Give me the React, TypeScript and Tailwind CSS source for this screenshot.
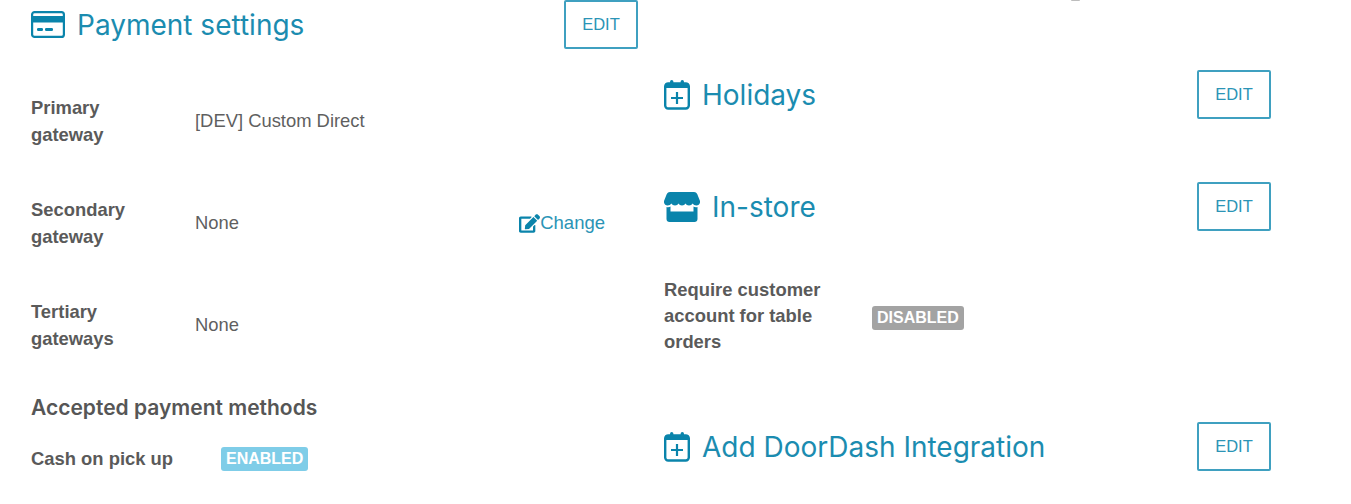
import React from "react";
import { FaEdit } from "react-icons/fa";

const CardIcon = () => (
  <svg width="34" height="27" viewBox="0 0 34 27" fill="none" className="shrink-0">
    <rect x="1.100" y="1.100" width="31.800" height="24.800" rx="2.500" stroke="#0a84ab" strokeWidth="2.200" />
    <rect x="1" y="5" width="32" height="6.500" fill="#0a84ab" />
    <rect x="6" y="17" width="6" height="3" rx="1.200" fill="#0a84ab" />
    <rect x="14" y="17" width="8" height="3" rx="1.200" fill="#0a84ab" />
  </svg>
);

const CalendarPlusIcon = () => (
  <svg width="26" height="30" viewBox="0 0 26 30" fill="none" className="shrink-0">
    <rect x="1.200" y="3.500" width="23.600" height="25" rx="3" stroke="#0a84ab" strokeWidth="2.400" />
    <rect x="1.200" y="3.500" width="23.600" height="4.500" fill="#0a84ab" />
    <rect x="6" y="0" width="3.400" height="6" rx="1.700" fill="#0a84ab" />
    <rect x="16.600" y="0" width="3.400" height="6" rx="1.700" fill="#0a84ab" />
    <path d="M13 12V24M7 18h12" stroke="#0a84ab" strokeWidth="2.200" />
  </svg>
);

const StoreIcon = () => (
  <svg width="36" height="30" viewBox="0 0 36 30" fill="none" className="shrink-0">
    <path
      d="M6 0h24c1.500 0 2.500.7 3.200 2L36 9c.4 2.600-1.400 4.500-3.600 4.500-1.700 0-3-.9-3.700-2-.8 1.200-2.200 2-3.700 2s-2.900-.8-3.500-2c-.7 1.200-2 2-3.500 2s-2.800-.8-3.500-2c-.6 1.200-2 2-3.500 2s-2.900-.8-3.700-2c-.7 1.100-2 2-3.700 2C1.400 13.500-.4 11.600 0 9L2.800 2C3.500.7 4.500 0 6 0z"
      fill="#0a84ab"
    />
    <path
      d="M2.500 15c1.500.4 3 .2 4-.4V19.500h23v-4.900c1 .6 2.500.8 4 .4V27c0 1.700-1.300 3-3 3h-25c-1.700 0-3-1.300-3-3V15z"
      fill="#0a84ab"
    />
  </svg>
);

const EditButton = () => (
  <button className="w-[74px] h-[49px] shrink-0 rounded-[2px] border-2 border-[#3fa0c0] bg-white text-[#2b94b6] text-[16.500px] font-['Liberation_Sans',sans-serif]">
    EDIT
  </button>
);

const SectionHeader = ({ icon, title, gap }: { icon: React.ReactNode; title: string; gap: string }) => (
  <div className="flex items-center justify-between h-[49px]">
    <div className={`flex items-center ${gap}`}>
      {icon}
      <h2 className="text-[28px] text-[#1b8cb0] font-['Inter',sans-serif] leading-none">{title}</h2>
    </div>
    <EditButton />
  </div>
);

const GatewayRow = ({ label, value, action }: { label: React.ReactNode; value: string; action?: boolean }) => (
  <div className="flex items-center h-[54px] mb-[48px] pr-[33px]">
    <div className="w-[164px] font-bold text-[#5a5a5a] leading-[27px]">{label}</div>
    <div className="flex-1 text-[#5f5f5f]">{value}</div>
    {action && (
      <a className="flex items-center text-[#2b94b6] text-[18.500px]">
        <FaEdit className="text-[21px] text-[#0a84ab]" />
        Change
      </a>
    )}
  </div>
);

const Badge = ({ text, color }: { text: string; color: string }) => (
  <span className={`inline-flex items-center justify-center h-[24px] px-[5px] rounded-[3px] text-white font-bold text-[16px] ${color}`}>
    {text}
  </span>
);

export default function App() {
  return (
    <div className="relative h-[504px] w-[1351px] overflow-hidden bg-white text-[18.400px] font-['Liberation_Sans',sans-serif]">
      <div className="absolute left-[1071px] top-0 h-[1px] w-[9px] rounded-b bg-[#bdbdbd]" />
      <div className="flex items-start pl-[31px] pr-[80px]">
        {/* Payment settings */}
        <section className="w-[607px] shrink-0">
          <SectionHeader icon={<CardIcon />} title="Payment settings" gap="gap-[12px]" />
          <div className="pt-[45px]">
            <GatewayRow label={<>Primary<br />gateway</>} value="[DEV] Custom Direct" />
            <GatewayRow label={<>Secondary<br />gateway</>} value="None" action />
            <GatewayRow label={<>Tertiary<br />gateways</>} value="None" />
          </div>
          <h3 className="-mt-[6px] font-['Inter',sans-serif] font-semibold text-[21px] leading-[27px] text-[#565656]">
            Accepted payment methods
          </h3>
          <div className="flex items-center mt-[24px]">
            <div className="w-[190px] font-bold text-[#5a5a5a]">Cash on pick up</div>
            <Badge text="ENABLED" color="bg-[#7fcde8]" />
          </div>
          <div className="flex items-center mt-[32px] pl-[190px]">
            <Badge text="ENABLED" color="bg-[#7fcde8]" />
          </div>
        </section>

        {/* Right column */}
        <section className="w-[607px] shrink-0 ml-[26px] pt-[70px]">
          <SectionHeader icon={<CalendarPlusIcon />} title="Holidays" gap="gap-[12px]" />
          <div className="mt-[63px]">
            <SectionHeader icon={<StoreIcon />} title="In-store" gap="gap-[12px]" />
          </div>
          <div className="flex items-center mt-[46px]">
            <div className="w-[170px] mr-[38px] font-bold text-[#5a5a5a] leading-[26px]">
              Require customer account for table orders
            </div>
            <div className="mt-[2px]">
              <Badge text="DISABLED" color="bg-[#a3a3a3]" />
            </div>
          </div>
          <div className="mt-[67px]">
            <SectionHeader icon={<CalendarPlusIcon />} title="Add DoorDash Integration" gap="gap-[12px]" />
          </div>
        </section>
      </div>
    </div>
  );
}
